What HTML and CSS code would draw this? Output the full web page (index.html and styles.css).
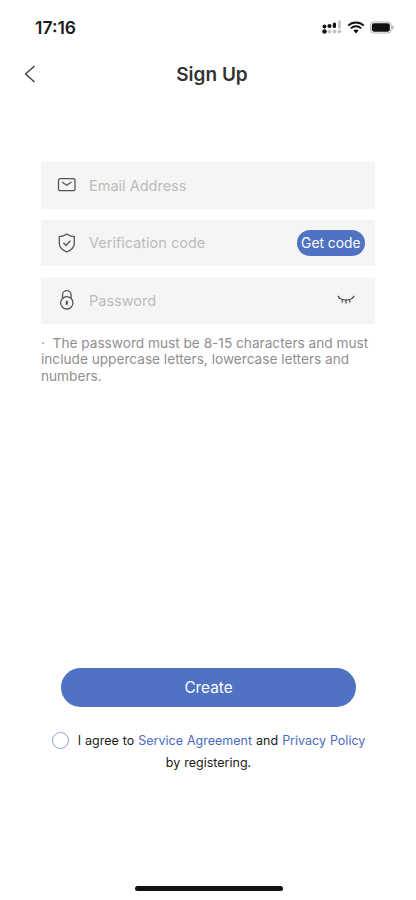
FILE: index.html
```html
<!DOCTYPE html>
<html lang="en">
<head>
<meta charset="utf-8">
<title>Sign Up</title>
<link rel="stylesheet" href="styles.css">
</head>
<body>
<div class="screen">
  <div class="status">
    <span class="time">17:16</span>
    <div class="status-icons">
      <svg class="sig" width="20" height="14" viewBox="0 0 20 14"><g fill="#c4c4c4"><circle cx="7.500" cy="11.500" r="1.900"/><circle cx="12.500" cy="11.500" r="1.900"/><rect x="16" y="0.500" width="2.800" height="8"/><circle cx="17.400" cy="11.500" r="1.800"/></g><g fill="#111"><circle cx="2.500" cy="6.500" r="2"/><circle cx="2.500" cy="11.500" r="2.200"/><circle cx="7.500" cy="6" r="2.100"/><rect x="10.800" y="2.500" width="3.200" height="5.500" rx="1.500"/></g></svg>
      <svg width="18" height="13" viewBox="0 0 18 13"><path d="M1.200 4.600a11.200 11.200 0 0 1 15.600 0M3.900 7.400a7.400 7.400 0 0 1 10.200 0" fill="none" stroke="#111" stroke-width="2"/><path d="M6.400 9.600a3.800 3.800 0 0 1 5.200 0L9 12.600z" fill="#111"/></svg>
      <svg class="bat" width="24" height="13" viewBox="0 0 26 14"><rect x="0.500" y="1" width="22.500" height="12" rx="3.500" fill="none" stroke="#aaa"/><rect x="2" y="2.500" width="19.500" height="9" rx="2.200" fill="#111"/><rect x="24" y="5" width="1.400" height="4" rx="0.700" fill="#aaa"/></svg>
    </div>
  </div>

  <header class="nav">
    <svg class="back" width="12" height="20" viewBox="0 0 12 20"><path d="M10.500 2 1.500 10l9 8" fill="none" stroke="#333" stroke-width="1.300"/></svg>
    <h1>Sign Up</h1>
  </header>

  <form class="form">
    <div class="field">
      <svg class="ico" width="20" height="20" viewBox="0 0 20 20"><rect x="1.500" y="3.700" width="16.500" height="12" rx="1.600" fill="none" stroke="#555" stroke-width="1.300"/><path d="M5 7 9.700 10.300 14.500 7" fill="none" stroke="#555" stroke-width="1.300"/></svg>
      <span class="ph">Email Address</span>
    </div>
    <div class="field">
      <svg class="ico" width="20" height="20" viewBox="0 0 20 20"><path d="M9.800 1c2.200 1.700 4.600 2.500 7.500 2.700v6.700c0 3.900-3.400 6.700-7.500 8.600-4.100-1.900-7.500-4.700-7.500-8.600V3.700C5.200 3.500 7.600 2.700 9.800 1z" fill="none" stroke="#555" stroke-width="1.300"/><path d="M6.400 9.800 9 12.500 13.400 7.800" fill="none" stroke="#555" stroke-width="1.300"/></svg>
      <span class="ph">Verification code</span>
      <span class="code-btn">Get code</span>
    </div>
    <div class="field">
      <svg class="ico" width="20" height="20" viewBox="0 0 20 20"><path d="M5.500 9V5a4.300 4.300 0 0 1 8.600 0v4" fill="none" stroke="#555" stroke-width="1.300"/><circle cx="9.800" cy="12.800" r="6.200" fill="none" stroke="#555" stroke-width="1.300"/><path d="M9.800 11.500v2.600" stroke="#555" stroke-width="2.200" stroke-linecap="round"/></svg>
      <span class="ph">Password</span>
      <svg class="eye" width="18" height="10" viewBox="0 0 18 10"><path d="M1.500 2.400C5.500 6 12.500 6 16.500 2.400M.8 .8l2.200 2.800M17.200 .8 15 3.600M5.600 4.600 5 7.600M9 5.200V8.600M12.400 4.600l.6 3" fill="none" stroke="#444" stroke-width="1.200"/></svg>
    </div>
    <p class="hint">·&nbsp; The password must be 8-15 characters and must include uppercase letters, lowercase letters and numbers.</p>
  </form>

  <div class="actions">
    <div class="create">Create</div>
    <p class="agree"><span class="radio"></span>I agree to <a>Service Agreement</a> and <a>Privacy Policy</a><br>by registering.</p>
  </div>

  <div class="home-wrap"><div class="home"></div></div>
</div>
</body>
</html>
```

FILE: styles.css
```css
* { box-sizing: border-box; }
html, body { margin: 0; padding: 0; background: #fff; }
body { font-family: Inter, "Liberation Sans", sans-serif; }
.screen { width: 416px; height: 900px; display: flex; flex-direction: column; overflow: hidden; }

.status { height: 54px; padding: 0 22px 0 35px; display: flex; justify-content: space-between; align-items: center; }
.time { font-size: 17.500px; font-weight: 600; color: #1c1c1c; }
.status-icons { display: flex; align-items: center; gap: 5px; }

.nav { height: 40px; position: relative; display: flex; align-items: center; justify-content: center; }
.nav h1 { margin: 0; font-size: 19px; font-weight: 600; color: #333; padding-left: 8px; }
.back { position: absolute; left: 24px; top: 10px; }

.form { padding: 68px 41px 0; display: flex; flex-direction: column; gap: 11px; }
.field { height: 46.500px; background: #f5f5f5; display: flex; align-items: center; padding: 0 10px 0 16px; gap: 12px; }
.ph { font-size: 14.500px; color: #bcbcbc; flex: 1; }
.code-btn { background: #4f72c2; color: #fff; font-size: 13.800px; height: 26px; line-height: 26px; padding: 0 4.500px; border-radius: 13px; }
.eye { margin-right: 10px; }
.hint { margin: 0; font-size: 13.650px; line-height: 16.500px; color: #8f8f8f; }

.actions { margin-top: 284px; display: flex; flex-direction: column; align-items: center; }
.create { width: 295px; height: 39px; border-radius: 20px; background: #4f72c2; color: #fff; font-size: 15.300px; display: flex; align-items: center; justify-content: center; margin-left: 1px; }
.agree { margin: 23px 0 0; padding-left: 1px; width: 100%; font-size: 12.500px; word-spacing: 0.500px; line-height: 22px; color: #1a1a1a; text-align: center; white-space: nowrap; }
.radio { display: inline-block; width: 17px; height: 17px; margin-right: 9px; vertical-align: -4px; border-radius: 50%; border: 1.300px solid #8a9fdc; }
.agree a { color: #4a6bc0; }

.home-wrap { margin-top: auto; padding-bottom: 9px; display: flex; justify-content: center; }
.home { width: 148px; height: 5px; border-radius: 3px; background: #111; margin-left: 1px; }
```
